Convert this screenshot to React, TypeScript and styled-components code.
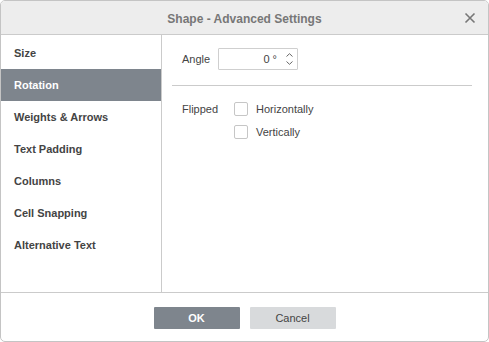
import React from "react";
import styled, { createGlobalStyle } from "styled-components";

const Global = createGlobalStyle`
  html, body { margin: 0; padding: 0; background: #fff; }
  body { font-family: "Liberation Sans", Arial, Helvetica, sans-serif; }
`;

const Dialog = styled.div`
  box-sizing: border-box;
  width: 489px;
  height: 342px;
  border: 1px solid #c4c4c4;
  border-radius: 5px;
  overflow: hidden;
  display: flex;
  flex-direction: column;
  background: #fff;
  font-size: 11px;
  color: #444;
`;

const Header = styled.div`
  position: relative;
  height: 33px;
  flex: none;
  background: #ededed;
  border-bottom: 1px solid #cbcbcb;
  display: flex;
  align-items: center;
  justify-content: center;
`;

const Title = styled.div`
  font-size: 12px;
  font-weight: bold;
  color: #777;
  padding-top: 2px;
`;

const Close = styled.button`
  position: absolute;
  right: 12px;
  top: 11px;
  width: 12px;
  height: 12px;
  padding: 0;
  border: 0;
  background: none;
  display: flex;
`;

const Body = styled.div`
  flex: 1;
  display: flex;
  min-height: 0;
`;

const Sidebar = styled.div`
  width: 160px;
  flex: none;
  border-right: 1px solid #cbcbcb;
  padding-top: 2px;
  display: flex;
  flex-direction: column;
`;

const Item = styled.div<{ $active?: boolean }>`
  height: 32px;
  display: flex;
  align-items: center;
  padding-left: 13px;
  font-weight: bold;
  font-size: 11px;
  color: ${(p) => (p.$active ? "#fff" : "#444")};
  background: ${(p) => (p.$active ? "#7e858d" : "transparent")};
`;

const Panel = styled.div`
  flex: 1;
  padding: 13px 20px 0 20px;
  display: flex;
  flex-direction: column;
`;

const Row = styled.div`
  display: flex;
  align-items: flex-start;
`;

const Label = styled.div<{ $w: number; $h: number }>`
  width: ${(p) => p.$w}px;
  height: ${(p) => p.$h}px;
  display: flex;
  align-items: center;
  flex: none;
`;

const Spin = styled.div`
  box-sizing: border-box;
  width: 80px;
  height: 22px;
  border: 1px solid #cfcfcf;
  border-radius: 1px;
  display: flex;
  align-items: center;
  justify-content: flex-end;
`;

const SpinValue = styled.div`
  padding-right: 5px;
  font-size: 11px;
  color: #444;
`;

const Arrows = styled.div`
  width: 14px;
  height: 20px;
  display: flex;
  flex-direction: column;
  align-items: center;
  justify-content: center;
  gap: 4px;
  margin-right: 1px;
`;

const Separator = styled.div`
  width: 300px;
  height: 1px;
  background: #cbcbcb;
  margin: 15px 0 16px -10px;
`;

const Checks = styled.div`
  display: flex;
  flex-direction: column;
  gap: 9px;
`;

const CheckRow = styled.label`
  display: flex;
  align-items: center;
  height: 14px;
`;

const Box = styled.span`
  box-sizing: border-box;
  width: 14px;
  height: 14px;
  border: 1px solid #c6c6c6;
  border-radius: 2px;
  background: #fff;
  margin-right: 8px;
  flex: none;
`;

const Footer = styled.div`
  height: 49px;
  flex: none;
  border-top: 1px solid #cbcbcb;
  display: flex;
  justify-content: center;
  padding-top: 14px;
  box-sizing: border-box;
  gap: 10px;
`;

const Button = styled.button<{ $primary?: boolean }>`
  width: 86px;
  height: 22px;
  border: 0;
  border-radius: 1px;
  font-family: "Liberation Sans", Arial, sans-serif;
  font-size: 11px;
  font-weight: ${(p) => (p.$primary ? "bold" : "normal")};
  color: ${(p) => (p.$primary ? "#fff" : "#444")};
  background: ${(p) => (p.$primary ? "#7e858d" : "#d8dadc")};
  padding: 0;
`;

const items = [
  "Size",
  "Rotation",
  "Weights & Arrows",
  "Text Padding",
  "Columns",
  "Cell Snapping",
  "Alternative Text",
];

export default function App() {
  return (
    <>
      <Global />
      <Dialog>
        <Header>
          <Title>Shape - Advanced Settings</Title>
          <Close aria-label="Close">
            <svg width="12" height="12" viewBox="0 0 12 12">
              <path d="M1.5 1.5 L10.5 10.5 M10.5 1.5 L1.5 10.5" stroke="#777" strokeWidth="1.6" fill="none" />
            </svg>
          </Close>
        </Header>
        <Body>
          <Sidebar>
            {items.map((t) => (
              <Item key={t} $active={t === "Rotation"}>
                {t}
              </Item>
            ))}
          </Sidebar>
          <Panel>
            <Row>
              <Label $w={36} $h={22}>Angle</Label>
              <Spin>
                <SpinValue>0 °</SpinValue>
                <Arrows>
                  <svg width="7" height="4" viewBox="0 0 7 4">
                    <path d="M0.5 3.5 L3.5 0.7 L6.5 3.5" stroke="#666" strokeWidth="1" fill="none" />
                  </svg>
                  <svg width="7" height="4" viewBox="0 0 7 4">
                    <path d="M0.5 0.5 L3.5 3.3 L6.5 0.5" stroke="#666" strokeWidth="1" fill="none" />
                  </svg>
                </Arrows>
              </Spin>
            </Row>
            <Separator />
            <Row>
              <Label $w={52} $h={14}>Flipped</Label>
              <Checks>
                <CheckRow>
                  <Box />
                  Horizontally
                </CheckRow>
                <CheckRow>
                  <Box />
                  Vertically
                </CheckRow>
              </Checks>
            </Row>
          </Panel>
        </Body>
        <Footer>
          <Button $primary>OK</Button>
          <Button>Cancel</Button>
        </Footer>
      </Dialog>
    </>
  );
}
